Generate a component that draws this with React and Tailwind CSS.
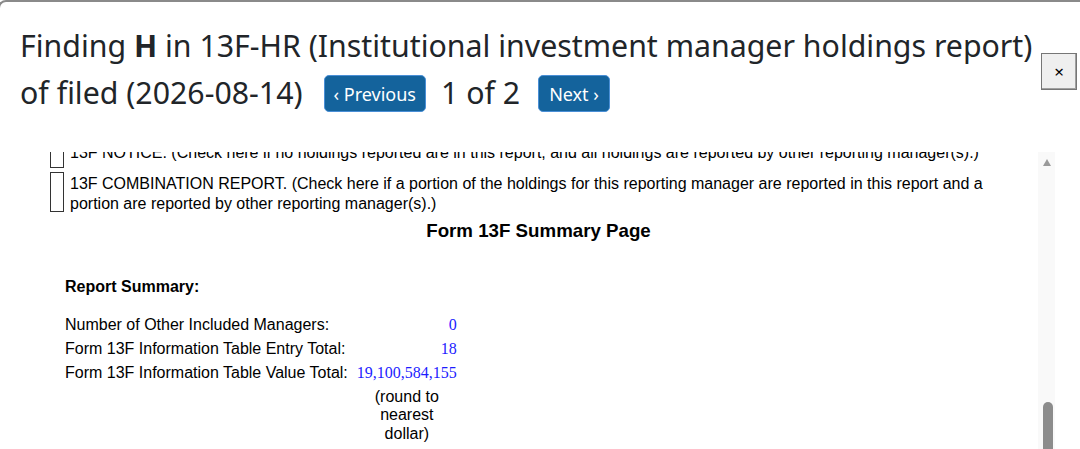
const ui = { fontFamily: '"Noto Sans", "Open Sans", sans-serif' };
const arial = { fontFamily: '"Liberation Sans", Arial, sans-serif' };
const times = { fontFamily: '"Liberation Serif", "Times New Roman", serif' };

const summary = [
  ["Number of Other Included Managers:", "0"],
  ["Form 13F Information Table Entry Total:", "18"],
  ["Form 13F Information Table Value Total:", "19,100,584,155"],
];

function PageButton({ children }) {
  return (
    <button
      className="relative -top-[2px] inline-flex h-[37px] items-center rounded-[5px] border border-[#4a8fd6] bg-[#14639c] px-[9px] align-middle text-[18px] leading-none text-white"
      style={ui}
    >
      {children}
    </button>
  );
}

function ScrollTrack() {
  return (
    <div className="relative w-[17px] shrink-0 bg-[#f9f9f9]">
      <svg className="absolute left-[5px] top-[7px]" width="8" height="7" viewBox="0 0 8 7">
        <path d="M4 0 L8 7 L0 7 Z" fill="#9a9a9a" />
      </svg>
      <div className="absolute left-[5px] top-[250px] h-[60px] w-[10px] rounded-t-[5px] bg-[#8c8c8c]" />
    </div>
  );
}

export default function App() {
  return (
    <div className="h-[449px] w-[1080px] overflow-hidden bg-white">
      <div className="-ml-[2px] h-full rounded-tl-[8px] border-l-2 border-t-2 border-[#8a8a8a] bg-white">
        {/* header */}
        <div className="flex h-[150px] items-start pl-[20px] pr-[3px]">
          <h4
            className="mt-[20px] w-[1018px] text-[30.3px] leading-[47px] text-[#212529]"
            style={ui}
          >
            Finding <b className="font-bold">H</b> in 13F-HR (Institutional investment manager holdings report)
            of filed (2026-08-14) <span className="ml-[13px]" />
            <PageButton>‹ Previous</PageButton>
            <span className="ml-[15px] mr-[18px]">1 of 2</span>
            <PageButton>
              <span className="px-[1px]">Next ›</span>
            </PageButton>
          </h4>
          <button className="ml-auto mt-[51px] flex h-[37px] w-[36px] items-center justify-center border border-[#767676] bg-[#efefef] text-[17px] leading-none text-black shadow-[inset_-1px_-1px_0_#a0a0a0]">
            ×
          </button>
        </div>

        {/* document frame */}
        <div className="flex h-[300px] pl-[39px] pr-[25px]">
          <div className="flex-1 overflow-hidden text-[16px] leading-[1.15] text-black" style={arial}>
            <div className="-mt-[10px] pl-[11px]">
              <div className="flex items-start gap-[6px]">
                <div className="h-[26px] w-[14px] shrink-0 border border-[#333]" />
                <p className="mt-[2px] w-[925px]">
                  13F NOTICE. (Check here if no holdings reported are in this report, and all holdings are reported by
                  other reporting manager(s).)
                </p>
              </div>
              <div className="mt-[4px] flex items-start gap-[6px]">
                <div className="h-[40px] w-[14px] shrink-0 border border-[#333]" />
                <p className="mt-[2px] w-[925px] leading-[19.5px]">
                  13F COMBINATION REPORT. (Check here if a portion of the holdings for this reporting manager are
                  reported in this report and a portion are reported by other reporting manager(s).)
                </p>
              </div>
            </div>

            <h3 className="mt-[7px] text-center text-[18.72px] font-bold">Form 13F Summary Page</h3>

            <div className="mt-[36px] pl-[26px]">
              <p className="font-bold">Report Summary:</p>
              <table className="mt-[17px] border-collapse">
                <tbody>
                  {summary.map(([label, value]) => (
                    <tr key={label} className="h-[24px]">
                      <td className="p-0 pr-[9px]">{label}</td>
                      <td className="p-0 text-right text-[#1c1cff]" style={times}>
                        {value}
                      </td>
                    </tr>
                  ))}
                  <tr>
                    <td />
                    <td className="w-[100px] p-0 pt-[3px] text-center">(round to nearest dollar)</td>
                  </tr>
                </tbody>
              </table>
            </div>
          </div>
          <ScrollTrack />
        </div>
      </div>
    </div>
  );
}
